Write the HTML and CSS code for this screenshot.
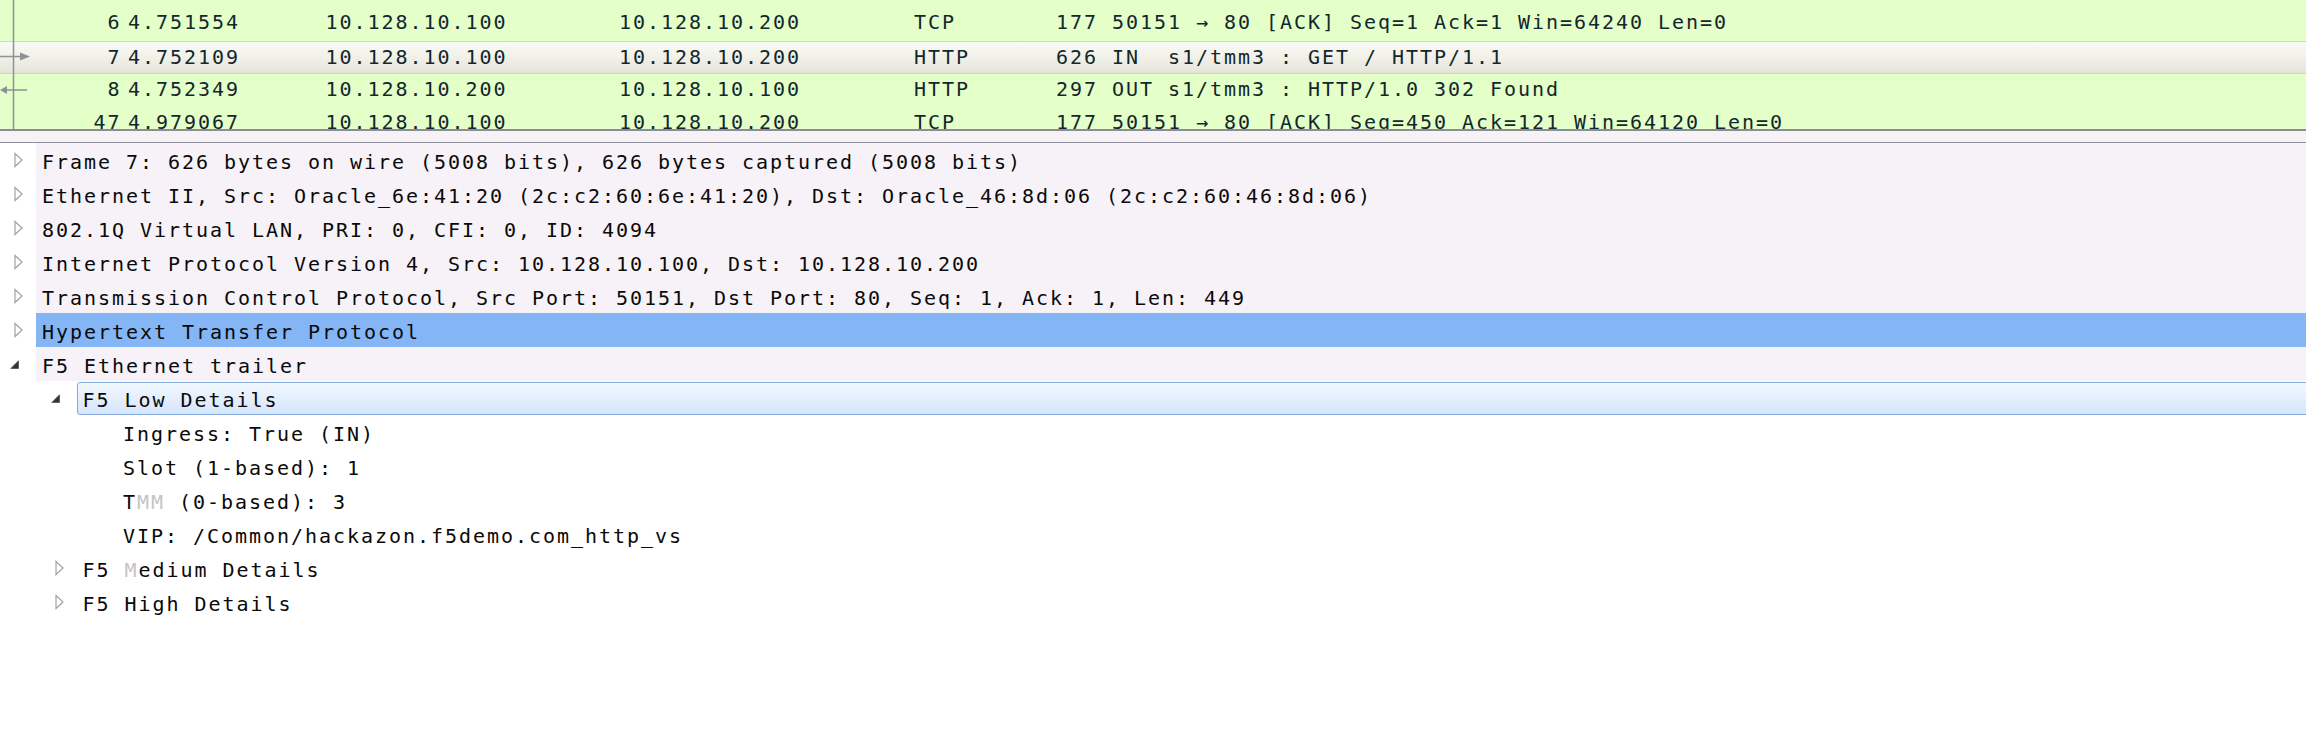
FILE: index.html
```html
<!DOCTYPE html>
<html>
<head>
<meta charset="utf-8">
<link rel="stylesheet" href="styles.css">
</head>
<body>
<div class="app">
  <section class="plist">
    <div class="rows">
      <div class="prow">
        <span class="c-no">6</span><span class="c-time">4.751554</span><span class="c-src">10.128.10.100</span><span class="c-dst">10.128.10.200</span><span class="c-proto">TCP</span><span class="c-len">177</span><span class="c-info">50151 → 80 [ACK] Seq=1 Ack=1 Win=64240 Len=0</span>
      </div>
      <div class="prow sel">
        <span class="c-no">7</span><span class="c-time">4.752109</span><span class="c-src">10.128.10.100</span><span class="c-dst">10.128.10.200</span><span class="c-proto">HTTP</span><span class="c-len">626</span><span class="c-info">IN  s1/tmm3 : GET / HTTP/1.1</span>
      </div>
      <div class="prow">
        <span class="c-no">8</span><span class="c-time">4.752349</span><span class="c-src">10.128.10.200</span><span class="c-dst">10.128.10.100</span><span class="c-proto">HTTP</span><span class="c-len">297</span><span class="c-info">OUT s1/tmm3 : HTTP/1.0 302 Found</span>
      </div>
      <div class="prow">
        <span class="c-no">47</span><span class="c-time">4.979067</span><span class="c-src">10.128.10.100</span><span class="c-dst">10.128.10.200</span><span class="c-proto">TCP</span><span class="c-len">177</span><span class="c-info">50151 → 80 [ACK] Seq=450 Ack=121 Win=64120 Len=0</span>
      </div>
    </div>
    <svg class="related" width="40" height="130" viewBox="0 0 40 130">
      <line x1="13.5" y1="0" x2="13.5" y2="130" stroke="#8c9296" stroke-width="1.5"/>
      <line x1="0" y1="56.5" x2="22" y2="56.5" stroke="#8c9296" stroke-width="1.5"/>
      <path d="M20 52.5 L30 56.5 L20 60.5 Z" fill="#8c9296"/>
      <line x1="6" y1="90" x2="27" y2="90" stroke="#8c9296" stroke-width="1.5"/>
      <path d="M7 86 L0 90 L7 94 Z" fill="#8c9296"/>
    </svg>
  </section>
  <div class="splitter"></div>
  <section class="tree">
    <div class="trow top">
      <span class="tw"><svg width="10" height="16" viewBox="0 0 10 16"><path d="M1 1.5 L8 8 L1 14.5 Z" fill="#fff" stroke="#a2a2a2" stroke-width="1.2"/></svg></span>
      <span class="lbl">Frame 7: 626 bytes on wire (5008 bits), 626 bytes captured (5008 bits)</span>
    </div>
    <div class="trow top">
      <span class="tw"><svg width="10" height="16" viewBox="0 0 10 16"><path d="M1 1.5 L8 8 L1 14.5 Z" fill="#fff" stroke="#a2a2a2" stroke-width="1.2"/></svg></span>
      <span class="lbl">Ethernet II, Src: Oracle_6e:41:20 (2c:c2:60:6e:41:20), Dst: Oracle_46:8d:06 (2c:c2:60:46:8d:06)</span>
    </div>
    <div class="trow top">
      <span class="tw"><svg width="10" height="16" viewBox="0 0 10 16"><path d="M1 1.5 L8 8 L1 14.5 Z" fill="#fff" stroke="#a2a2a2" stroke-width="1.2"/></svg></span>
      <span class="lbl">802.1Q Virtual LAN, PRI: 0, CFI: 0, ID: 4094</span>
    </div>
    <div class="trow top">
      <span class="tw"><svg width="10" height="16" viewBox="0 0 10 16"><path d="M1 1.5 L8 8 L1 14.5 Z" fill="#fff" stroke="#a2a2a2" stroke-width="1.2"/></svg></span>
      <span class="lbl">Internet Protocol Version 4, Src: 10.128.10.100, Dst: 10.128.10.200</span>
    </div>
    <div class="trow top">
      <span class="tw"><svg width="10" height="16" viewBox="0 0 10 16"><path d="M1 1.5 L8 8 L1 14.5 Z" fill="#fff" stroke="#a2a2a2" stroke-width="1.2"/></svg></span>
      <span class="lbl">Transmission Control Protocol, Src Port: 50151, Dst Port: 80, Seq: 1, Ack: 1, Len: 449</span>
    </div>
    <div class="trow hl">
      <span class="tw"><svg width="10" height="16" viewBox="0 0 10 16"><path d="M1 1.5 L8 8 L1 14.5 Z" fill="#fff" stroke="#a2a2a2" stroke-width="1.2"/></svg></span>
      <span class="lbl">Hypertext Transfer Protocol</span>
    </div>
    <div class="trow top">
      <span class="tw open"><svg width="10" height="10" viewBox="0 0 10 10"><path d="M8.5 0.8 L8.5 8.5 L0.8 8.5 Z" fill="#333" stroke="#5e5e5e" stroke-width="0.9"/></svg></span>
      <span class="lbl">F5 Ethernet trailer</span>
    </div>
    <div class="trow l1 focus">
      <span class="tw open"><svg width="10" height="10" viewBox="0 0 10 10"><path d="M8.5 0.8 L8.5 8.5 L0.8 8.5 Z" fill="#333" stroke="#5e5e5e" stroke-width="0.9"/></svg></span>
      <span class="lbl">F5 Low Details</span>
    </div>
    <div class="trow l2"><span class="tw"></span><span class="lbl">Ingress: True (IN)</span></div>
    <div class="trow l2"><span class="tw"></span><span class="lbl">Slot (1-based): 1</span></div>
    <div class="trow l2"><span class="tw"></span><span class="lbl">T<span class="ghost">MM</span> (0-based): 3</span></div>
    <div class="trow l2"><span class="tw"></span><span class="lbl">VIP: /Common/hackazon.f5demo.com_http_vs</span></div>
    <div class="trow l1">
      <span class="tw"><svg width="10" height="16" viewBox="0 0 10 16"><path d="M1 1.5 L8 8 L1 14.5 Z" fill="#fff" stroke="#a2a2a2" stroke-width="1.2"/></svg></span>
      <span class="lbl">F5 <span class="ghost">M</span>edium Details</span>
    </div>
    <div class="trow l1">
      <span class="tw"><svg width="10" height="16" viewBox="0 0 10 16"><path d="M1 1.5 L8 8 L1 14.5 Z" fill="#fff" stroke="#a2a2a2" stroke-width="1.2"/></svg></span>
      <span class="lbl">F5 High Details</span>
    </div>
  </section>
</div>
</body>
</html>
```

FILE: styles.css
```css
html, body {
  margin: 0;
  padding: 0;
  background: #ffffff;
}

.app {
  width: 2306px;
  height: 744px;
  overflow: hidden;
  display: flex;
  flex-direction: column;
  font-family: "DejaVu Sans Mono", "Liberation Mono", monospace;
  font-size: 20px;
  letter-spacing: 1.96px;
}

/* ---------- packet list ---------- */
.plist {
  position: relative;
  height: 129px;
  flex: none;
  overflow: hidden;
  background: #e4ffc7;
  border-bottom: 2px solid #8a8c98;
}

.rows {
  padding-top: 7.4px;
}

.prow {
  display: flex;
  height: 33.3px;
  box-sizing: border-box;
  padding-bottom: 3.3px;
  line-height: 30px;
  color: #12272e;
  white-space: pre;
}

.prow.sel {
  background: linear-gradient(#fafaf6, #f2f2ea 45%, #e4e4da);
  border-top: 1px solid #d2d2ca;
  border-bottom: 1px solid #d2d2ca;
}

.c-no {
  width: 121.5px;
  text-align: right;
  flex: none;
}

.c-time {
  margin-left: 6.5px;
  width: 197.5px;
  flex: none;
}

.c-src {
  width: 293.5px;
  flex: none;
}

.c-dst {
  width: 295px;
  flex: none;
}

.c-proto {
  width: 120px;
  flex: none;
}

.c-len {
  width: 64px;
  text-align: right;
  flex: none;
}

.c-info {
  margin-left: 14px;
  flex: none;
}

.related {
  position: absolute;
  left: 0;
  top: 0;
}

/* ---------- splitter ---------- */
.splitter {
  height: 10.5px;
  flex: none;
  background: #f6f2f6;
  border-bottom: 1.5px solid #8e8e9a;
}

/* ---------- detail tree ---------- */
.tree {
  flex: 1;
  background: #ffffff;
  color: #0a0a0a;
}

.trow {
  display: flex;
  height: 34px;
  white-space: pre;
}

.tw {
  width: 36px;
  flex: none;
  display: flex;
  align-items: center;
  padding-left: 14px;
  box-sizing: border-box;
}

.tw.open {
  padding-left: 10px;
  padding-top: 2px;
}

.lbl {
  flex: 1;
  box-sizing: border-box;
  padding-left: 6px;
  padding-top: 4px;
  line-height: 30px;
}

.trow.top .lbl {
  background: #f6f2f7;
}

.trow.hl .lbl {
  background: #84b5f5;
}

.trow.l1 {
  padding-left: 40.5px;
}

.trow.l2 {
  padding-left: 81px;
}

.trow.focus .lbl {
  margin-top: 1px;
  margin-right: -4px;
  padding-top: 2px;
  padding-left: 5px;
  border: 1px solid #84aadc;
  border-radius: 3px;
  background: linear-gradient(#f2f9ff, #e4effd 50%, #d6e5fc);
}

.ghost {
  color: #c4c4c4;
}
```
